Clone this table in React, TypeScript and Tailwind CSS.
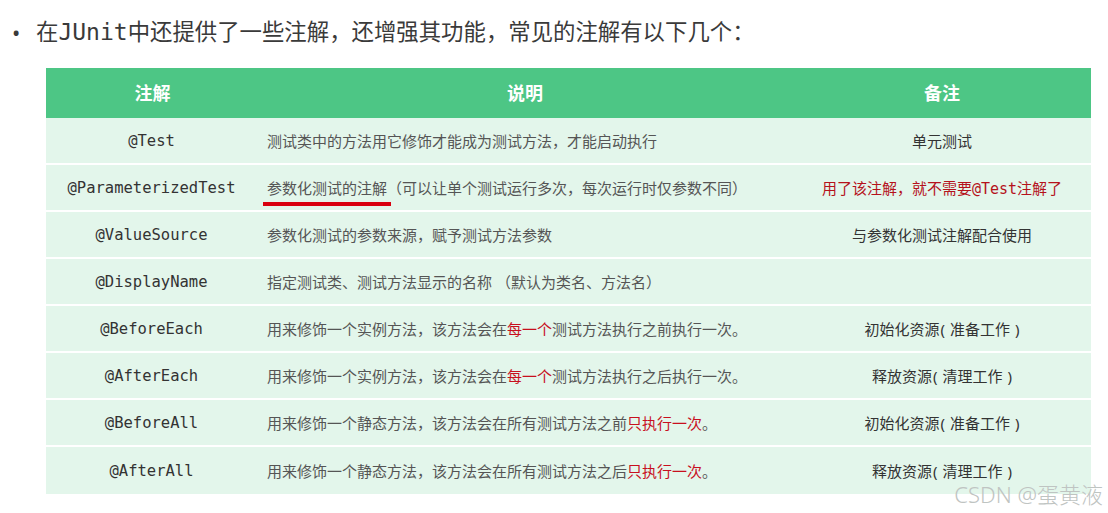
const cjk = "font-['Noto_Sans','Noto_Sans_CJK_SC',sans-serif]";
const mono = "font-['DejaVu_Sans_Mono','Noto_Sans_CJK_SC',monospace]";

type Row = {
  name: string;
  desc: React.ReactNode;
  note: React.ReactNode;
};

const Red = ({ children }: { children: React.ReactNode }) => (
  <span className="text-[#c8101e]">{children}</span>
);

// note like 初始化资源(准备工作) with loose parens
const Paren = ({ a, b }: { a: string; b: string }) => (
  <>
    {a}
    <span className="pl-[1px] pr-[5px]">(</span>
    {b}
    <span className="pl-[5px]">)</span>
  </>
);

const rows: Row[] = [
  {
    name: "@Test",
    desc: "测试类中的方法用它修饰才能成为测试方法，才能启动执行",
    note: "单元测试",
  },
  {
    name: "@ParameterizedTest",
    desc: (
      <>
        <span className="relative">
          参数化测试的注解
          <span className="absolute left-[-4px] right-[-4px] top-[24px] h-[4px] bg-[#d9000f]" />
        </span>
        （可以让单个测试运行多次，每次运行时仅参数不同）
      </>
    ),
    note: (
      <span className="text-[#b5121b]">
        用了该注解，就不需要<span className={mono}>@Test</span>注解了
      </span>
    ),
  },
  {
    name: "@ValueSource",
    desc: "参数化测试的参数来源，赋予测试方法参数",
    note: "与参数化测试注解配合使用",
  },
  {
    name: "@DisplayName",
    desc: "指定测试类、测试方法显示的名称 （默认为类名、方法名）",
    note: "",
  },
  {
    name: "@BeforeEach",
    desc: (
      <>
        用来修饰一个实例方法，该方法会在<Red>每一个</Red>测试方法执行之前执行一次。
      </>
    ),
    note: <Paren a="初始化资源" b="准备工作" />,
  },
  {
    name: "@AfterEach",
    desc: (
      <>
        用来修饰一个实例方法，该方法会在<Red>每一个</Red>测试方法执行之后执行一次。
      </>
    ),
    note: <Paren a="释放资源" b="清理工作" />,
  },
  {
    name: "@BeforeAll",
    desc: (
      <>
        用来修饰一个静态方法，该方法会在所有测试方法之前<Red>只执行一次</Red>。
      </>
    ),
    note: <Paren a="初始化资源" b="准备工作" />,
  },
  {
    name: "@AfterAll",
    desc: (
      <>
        用来修饰一个静态方法，该方法会在所有测试方法之后<Red>只执行一次</Red>。
      </>
    ),
    note: <Paren a="释放资源" b="清理工作" />,
  },
];

export default function App() {
  return (
    <div className={`relative w-[1108px] h-[513px] bg-white overflow-hidden ${cjk}`}>
      <div className="flex items-center h-[64px] pl-[12px] text-[22.4px] text-[#3a3a3a]">
        <span className="w-[24px] text-[22px] leading-none">•</span>
        <span>
          在<span className={`${mono} text-[23px]`}>JUnit</span>
          中还提供了一些注解，还增强其功能，常见的注解有以下几个：
        </span>
      </div>

      <div className="ml-[46px] mt-[4px] w-[1045px]">
        <div className="grid grid-cols-[211px_536px_298px] h-[50px] items-center bg-[#4dc685] text-white text-[18px] font-bold">
          <div className="text-center pl-[2px]">注解</div>
          <div className="text-center">说明</div>
          <div className="text-center">备注</div>
        </div>
        {rows.map((r, i) => (
          <div
            key={r.name}
            className={`grid grid-cols-[211px_536px_298px] h-[47px] items-center bg-[#e3f6eb] ${
              i < rows.length - 1 ? "border-b-2 border-white" : ""
            }`}
          >
            <div className={`${mono} text-center text-[15.5px] text-[#333] pt-[2px]`}>
              {r.name}
            </div>
            <div className="pl-[10px] text-[15px] text-[#555] whitespace-nowrap pt-[2px]">
              {r.desc}
            </div>
            <div className="text-center text-[15px] text-[#333] whitespace-nowrap pt-[2px]">
              {r.note}
            </div>
          </div>
        ))}
      </div>

      <div className="absolute right-[5px] bottom-[8px] text-[22px] leading-none text-[#bfc4c2] font-light">
        CSDN @蛋黄液
      </div>
    </div>
  );
}
